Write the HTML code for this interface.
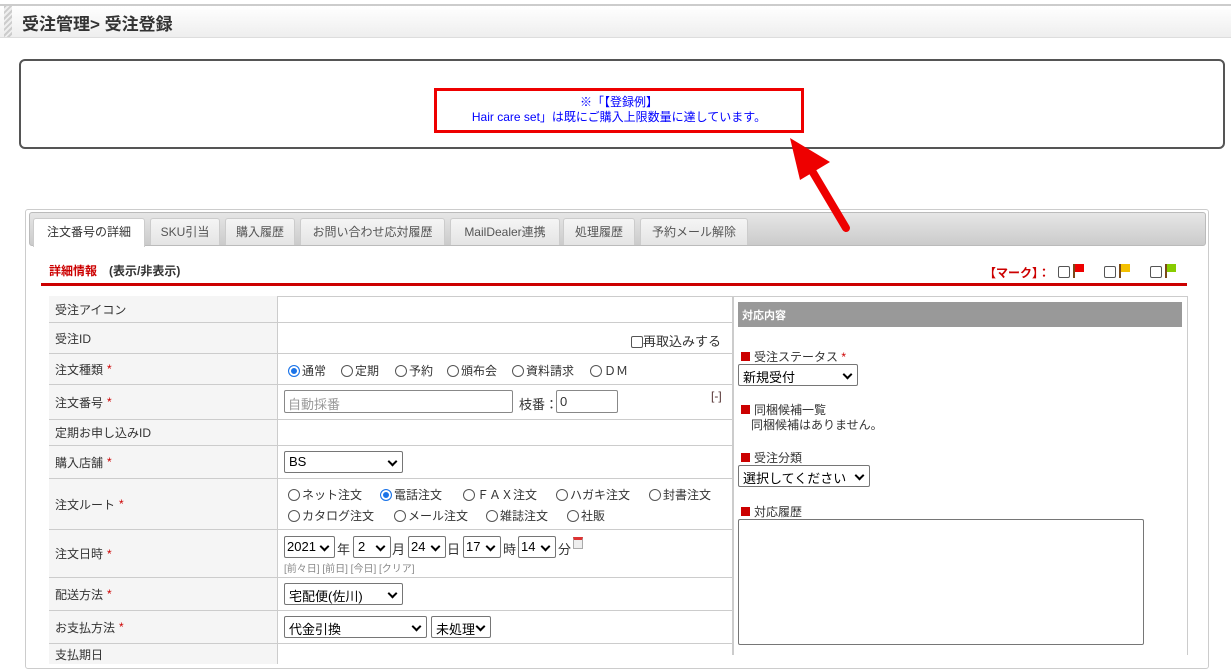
<!DOCTYPE html>
<html><head><meta charset="utf-8"><style>
*{box-sizing:border-box;margin:0;padding:0}
body{width:1231px;height:655px;overflow:hidden;background:#fff;font-family:"Liberation Sans","Noto Sans CJK JP",sans-serif;font-size:12px;color:#333;position:relative}
.a{position:absolute}
.sel{position:absolute;border:1px solid #767676;border-radius:2px;background:#fff;height:22px;font-size:13px;padding:2px 4px;color:#000}
.sel:after{content:"";position:absolute;right:6px;top:6px;width:5px;height:5px;border-right:2px solid #000;border-bottom:2px solid #000;transform:rotate(45deg)}
.rad{display:inline-block;width:12px;height:12px;border:1px solid #555;border-radius:50%;vertical-align:-2px;margin-right:2px}
.rad.on{border:1px solid #1a73e8;box-shadow:inset 0 0 0 2px #fff;background:#1a73e8}
.cb{display:inline-block;width:12px;height:12px;border:1px solid #555;border-radius:2px;vertical-align:-2px}
.row{position:absolute;left:49px;width:684px;border-bottom:1px solid #ccc}
.lab{position:absolute;left:0;top:0;bottom:0;width:229px;background:#f5f5f5;border-right:1px solid #ccc;padding-left:6px;display:flex;align-items:center;font-size:12px}
.req{color:#c00;margin-left:4px}
.tab{position:absolute;top:218px;height:27px;background:linear-gradient(#f5f5f5,#e4e4e4);border:1px solid #ccc;border-bottom:none;border-radius:3px 3px 0 0;font-size:12px;color:#555;text-align:center;line-height:26px}
.rm{display:inline-block;width:9px;height:9px;background:#c00;margin-right:4px}
.flag{display:inline-block;width:12px;height:14px;position:relative;vertical-align:-2px}
.flag:before{content:"";position:absolute;left:0;top:0;width:2px;height:14px;background:#7a4a1a}
.flag i{position:absolute;left:2px;top:0;width:9px;height:8px}
.r{position:absolute;font-size:12px;white-space:nowrap}
.t{position:absolute;font-size:13px}
</style></head><body>
<div class="a" style="left:0;top:4px;width:1231px;height:34px;background:linear-gradient(#fff,#eee);border-top:2px solid #ccc;border-bottom:1px solid #ddd"></div>
<div class="a" style="left:4px;top:6px;width:8px;height:31px;background:repeating-linear-gradient(135deg,#ccc 0 2px,#eee 2px 4px)"></div>
<div class="a" style="left:22px;top:10px;font-size:17px;font-weight:bold;color:#333">受注管理&gt; 受注登録</div>

<div class="a" style="left:19px;top:59px;width:1206px;height:90px;border:2px solid #555;border-radius:6px"></div>
<div class="a" style="left:434px;top:88px;width:370px;height:45px;border:3px solid #e00;text-align:center;color:#00f;font-size:12px;line-height:15px;padding-top:4px">※「【登録例】<br>Hair care set」は既にご購入上限数量に達しています。</div>

<div class="a" style="left:25px;top:209px;width:1184px;height:460px;border:1px solid #ccc;border-radius:3px"></div>
<div class="a" style="left:29px;top:212px;width:1177px;height:34px;background:linear-gradient(#e6e6e6,#cbcbcb);border:1px solid #bbb;border-radius:3px"></div>
<div class="tab" style="left:33px;width:112px;background:#fff;height:29px;color:#333">注文番号の詳細</div>
<div class="tab" style="left:150px;width:70px">SKU引当</div>
<div class="tab" style="left:225px;width:70px">購入履歴</div>
<div class="tab" style="left:300px;width:145px">お問い合わせ応対履歴</div>
<div class="tab" style="left:450px;width:110px">MailDealer連携</div>
<div class="tab" style="left:563px;width:72px">処理履歴</div>
<div class="tab" style="left:640px;width:108px">予約メール解除</div>
<svg class="a" style="left:780px;top:130px;z-index:5" width="80" height="110"><line x1="66" y1="98" x2="28" y2="34" stroke="#e00" stroke-width="8" stroke-linecap="round"/><polygon points="10,8 50,32 20,50" fill="#e00"/></svg>

<div class="a" style="left:49px;top:262px;font-weight:bold;font-size:12px"><span style="color:#c00">詳細情報</span>　<span style="color:#333">(表示/非表示)</span></div>
<div class="a" style="left:984px;top:264px;color:#c00;font-weight:bold;font-size:12px">【マーク】：</div>
<div class="a" style="left:1058px;top:264px"><span class="cb"></span> <span class="flag"><i style="background:#e00"></i></span></div>
<div class="a" style="left:1104px;top:264px"><span class="cb"></span> <span class="flag"><i style="background:#f4c000"></i></span></div>
<div class="a" style="left:1150px;top:264px"><span class="cb"></span> <span class="flag"><i style="background:#8c0"></i></span></div>
<div class="a" style="left:41px;top:283px;width:1146px;height:3px;background:#c00"></div>

<div class="a" style="left:49px;top:296px;width:684px;height:359px;border:1px solid #ccc;border-bottom:none"></div>
<div class="row" style="top:296px;height:27px"><div class="lab">受注アイコン</div></div>
<div class="row" style="top:323px;height:31px"><div class="lab">受注ID</div><div class="a" style="left:582px;top:8px;font-size:13px"><span class="cb"></span>再取込みする</div></div>
<div class="row" style="top:354px;height:31px"><div class="lab">注文種類<span class="req">*</span></div>
<div class="r" style="left:239px;top:8px"><span class="rad on"></span>通常</div>
<div class="r" style="left:292px;top:8px"><span class="rad"></span>定期</div>
<div class="r" style="left:346px;top:8px"><span class="rad"></span>予約</div>
<div class="r" style="left:398px;top:8px"><span class="rad"></span>頒布会</div>
<div class="r" style="left:463px;top:8px"><span class="rad"></span>資料請求</div>
<div class="r" style="left:541px;top:8px"><span class="rad"></span>ＤＭ</div></div>
<div class="row" style="top:385px;height:35px"><div class="lab">注文番号<span class="req">*</span></div>
<div class="a" style="left:235px;top:5px;width:229px;height:23px;border:1px solid #888;border-radius:2px;color:#999;font-size:13px;padding:3px 3px">自動採番</div>
<div class="a" style="left:470px;top:9px;font-size:13px">枝番：</div>
<div class="a" style="left:507px;top:5px;width:62px;height:23px;border:1px solid #888;border-radius:2px;font-size:13px;padding:3px 3px">0</div>
<div class="a" style="left:662px;top:4px;color:#533">[-]</div></div>
<div class="row" style="top:420px;height:26px"><div class="lab">定期お申し込みID</div></div>
<div class="row" style="top:446px;height:33px"><div class="lab">購入店舗<span class="req">*</span></div><div class="sel" style="left:235px;top:5px;width:119px">BS</div></div>
<div class="row" style="top:479px;height:51px"><div class="lab">注文ルート<span class="req">*</span></div>
<div class="r" style="left:239px;top:7px"><span class="rad"></span>ネット注文</div>
<div class="r" style="left:331px;top:7px"><span class="rad on"></span>電話注文</div>
<div class="r" style="left:414px;top:7px"><span class="rad"></span>ＦＡＸ注文</div>
<div class="r" style="left:507px;top:7px"><span class="rad"></span>ハガキ注文</div>
<div class="r" style="left:600px;top:7px"><span class="rad"></span>封書注文</div>
<div class="r" style="left:239px;top:28px"><span class="rad"></span>カタログ注文</div>
<div class="r" style="left:345px;top:28px"><span class="rad"></span>メール注文</div>
<div class="r" style="left:437px;top:28px"><span class="rad"></span>雑誌注文</div>
<div class="r" style="left:518px;top:28px"><span class="rad"></span>社販</div></div>
<div class="row" style="top:530px;height:48px"><div class="lab">注文日時<span class="req">*</span></div>
<div class="sel" style="left:235px;top:6px;width:51px;padding:2px 2px">2021</div><div class="t" style="left:288px;top:9px">年</div>
<div class="sel" style="left:304px;top:6px;width:38px">2</div><div class="t" style="left:343px;top:9px">月</div>
<div class="sel" style="left:359px;top:6px;width:38px;padding:2px 2px">24</div><div class="t" style="left:398px;top:9px">日</div>
<div class="sel" style="left:414px;top:6px;width:38px;padding:2px 2px">17</div><div class="t" style="left:454px;top:9px">時</div>
<div class="sel" style="left:469px;top:6px;width:38px;padding:2px 2px">14</div><div class="t" style="left:509px;top:9px">分</div>
<div class="a" style="left:524px;top:7px;width:10px;height:12px;border:1px solid #aaa;border-top:3px solid #d33;background:#eee"></div>
<div class="a" style="left:235px;top:30px;font-size:10px;color:#888">[前々日] [前日] [今日] [クリア]</div></div>
<div class="row" style="top:578px;height:33px"><div class="lab">配送方法<span class="req">*</span></div><div class="sel" style="left:235px;top:5px;width:119px">宅配便(佐川)</div></div>
<div class="row" style="top:611px;height:33px"><div class="lab">お支払方法<span class="req">*</span></div><div class="sel" style="left:235px;top:5px;width:143px">代金引換</div><div class="sel" style="left:382px;top:5px;width:60px">未処理</div></div>
<div class="row" style="top:644px;height:20px;border:none"><div class="lab">支払期日</div></div>

<div class="a" style="left:733px;top:296px;width:455px;height:359px;border:1px solid #ccc;border-bottom:none"></div>
<div class="a" style="left:738px;top:302px;width:444px;height:25px;background:#999;color:#fff;font-weight:bold;font-size:11px;padding:5px 4px">対応内容</div>
<div class="a" style="left:741px;top:348px;font-size:12px"><span class="rm"></span>受注ステータス<span style="color:#c00"> *</span></div>
<div class="sel" style="left:738px;top:364px;width:120px">新規受付</div>
<div class="a" style="left:741px;top:403px;font-size:12px;line-height:15px"><span class="rm"></span>同梱候補一覧<br>&nbsp;&nbsp;&nbsp;同梱候補はありません。</div>
<div class="a" style="left:741px;top:449px;font-size:12px"><span class="rm"></span>受注分類</div>
<div class="sel" style="left:738px;top:465px;width:132px">選択してください</div>
<div class="a" style="left:741px;top:503px;font-size:12px"><span class="rm"></span>対応履歴</div>
<div class="a" style="left:738px;top:519px;width:406px;height:126px;border:1px solid #767676;border-radius:2px"></div>
</body></html>
